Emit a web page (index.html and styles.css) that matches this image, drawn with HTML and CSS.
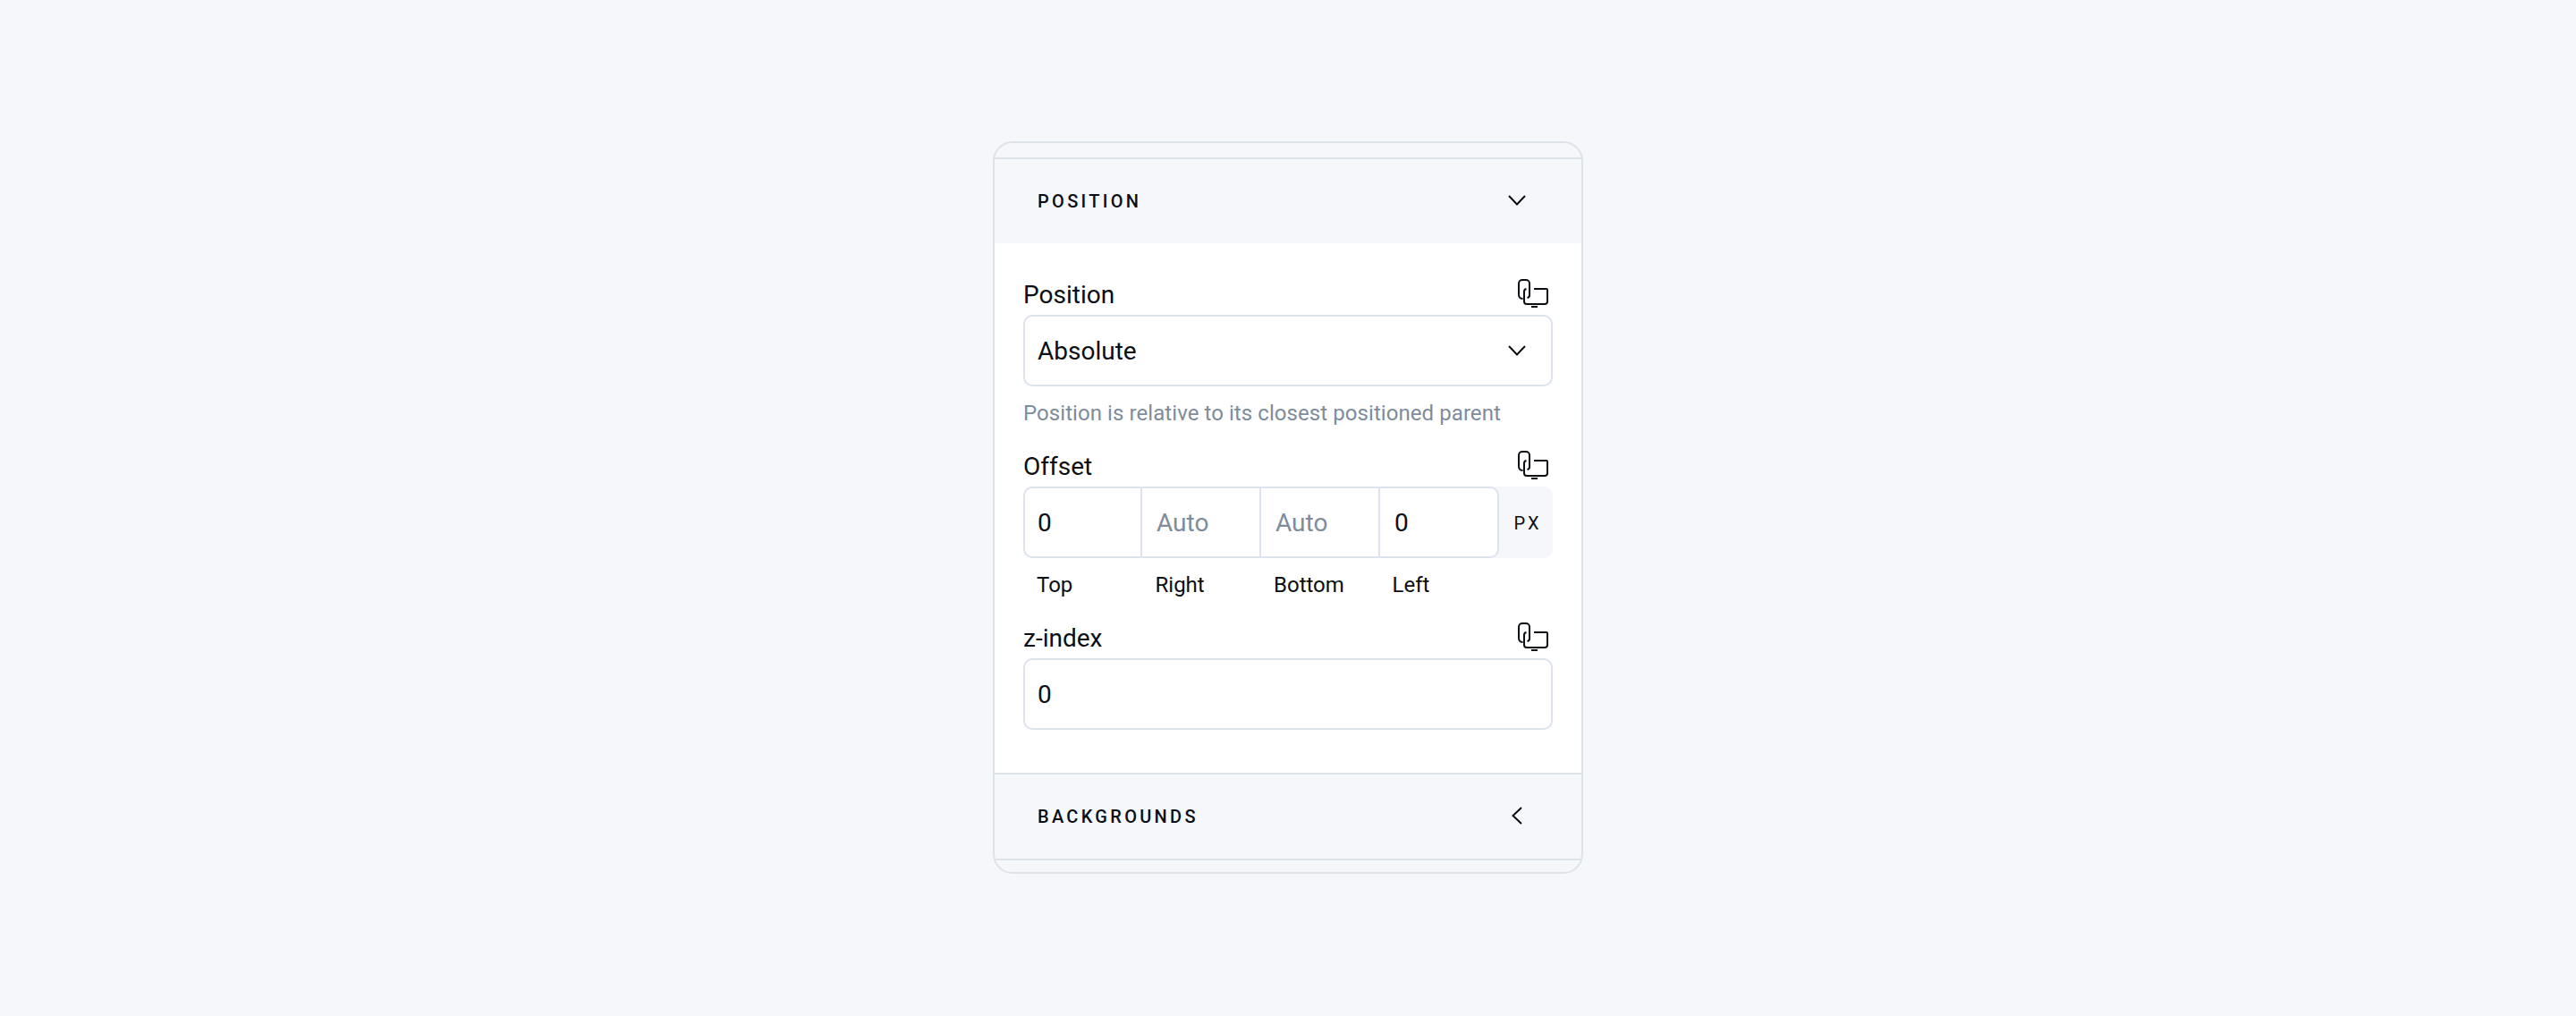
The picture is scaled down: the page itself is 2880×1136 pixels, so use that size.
FILE: index.html
```html
<!DOCTYPE html>
<html lang="en">
<head>
<meta charset="utf-8">
<title>Position panel</title>
<link rel="stylesheet" href="styles.css">
</head>
<body>
<svg class="sprite" width="0" height="0" aria-hidden="true">
  <defs>
    <symbol id="devices" viewBox="0 0 36 32">
      <path d="M6.500 22A4.500 4.500 0 0 1 2 17.500V5A4 4 0 0 1 6 1H10A4 4 0 0 1 14 5V18A3 3 0 0 1 11.500 21" />
      <path d="M10.500 11A3 3 0 0 0 8 14V25A3 3 0 0 0 11 28H31A3 3 0 0 0 34 25V12A1 1 0 0 0 33 11H19" />
      <path d="M16 31H23" />
    </symbol>
    <symbol id="chev-down" viewBox="0 0 20 12">
      <path d="M1 1L10 10.500L19 1" />
    </symbol>
    <symbol id="chev-left" viewBox="0 0 12 20">
      <path d="M11 1L1.500 10L11 19" />
    </symbol>
  </defs>
</svg>

<main class="panel">
  <section class="section">
    <header class="section-head">
      <h2 class="section-title">POSITION</h2>
      <svg class="icon-down"><use href="#chev-down"/></svg>
    </header>
    <div class="section-body">
      <div class="label-row">
        <span class="label">Position</span>
        <svg class="icon-devices"><use href="#devices"/></svg>
      </div>
      <div class="control select">
        <span>Absolute</span>
        <svg class="icon-down"><use href="#chev-down"/></svg>
      </div>
      <p class="help">Position is relative to its closest positioned parent</p>

      <div class="label-row">
        <span class="label">Offset</span>
        <svg class="icon-devices"><use href="#devices"/></svg>
      </div>
      <div class="offset">
        <div class="control offset-inputs">
          <span class="cell">0</span>
          <span class="cell muted">Auto</span>
          <span class="cell muted">Auto</span>
          <span class="cell">0</span>
        </div>
        <span class="unit">PX</span>
      </div>
      <div class="offset-labels">
        <span>Top</span>
        <span>Right</span>
        <span>Bottom</span>
        <span>Left</span>
      </div>

      <div class="label-row">
        <span class="label">z-index</span>
        <svg class="icon-devices"><use href="#devices"/></svg>
      </div>
      <div class="control"><span>0</span></div>
    </div>
  </section>
  <section class="section closed">
    <header class="section-head">
      <h2 class="section-title">BACKGROUNDS</h2>
      <svg class="icon-left"><use href="#chev-left"/></svg>
    </header>
  </section>
</main>
</body>
</html>
```
FILE: styles.css
```css
* { box-sizing: border-box; }
html, body { margin: 0; height: 100%; }
body {
  background: #f6f7fb;
  color: #0b0e13;
  font-family: Roboto, "Liberation Sans", sans-serif;
  font-size: 28px;
  padding-top: 158px;
  display: flex;
  justify-content: center;
}
.sprite { position: absolute; }
svg { fill: none; stroke: currentColor; stroke-width: 2; flex: none; }
.panel {
  width: 660px;
  height: 819px;
  border: 2px solid #dde3ea;
  border-radius: 22px;
  padding: 16px 0;
  overflow: hidden;
}
.section { border-top: 2px solid #dde3ea; }
.section.closed { border-bottom: 2px solid #dde3ea; }
.section-head {
  height: 94px;
  padding: 0 62px 0 48px;
  display: flex;
  align-items: center;
  justify-content: space-between;
}
.section-head svg { margin-bottom: 2px; }
.section-title {
  margin: 0;
  font-size: 20px;
  font-weight: 500;
  letter-spacing: 3.3px;
}
.section-body {
  background: #fff;
  padding: 40px 32px 48px;
}
.label-row {
  height: 40px;
  padding-bottom: 6px;
  display: flex;
  justify-content: space-between;
  align-items: center;
}
.icon-down { width: 20px; height: 12px; }
.section-head .icon-left { width: 12px; height: 20px; margin-right: 4px; }
.icon-devices { width: 36px; height: 32px; align-self: flex-start; margin-right: 4px; }
.control {
  height: 80px;
  border: 2px solid #dde3ea;
  border-radius: 10px;
  background: #fff;
  display: flex;
  align-items: center;
  padding: 0 14px;
}
.select { justify-content: space-between; padding-right: 28px; }
.help {
  margin: 10px 0 22px;
  line-height: 40px;
  font-size: 24px;
  letter-spacing: 0.07px;
  color: #7e8c9c;
}
.offset {
  display: flex;
  background: #f6f7fb;
  border-radius: 10px;
}
.offset-inputs {
  flex: 1;
  padding: 0;
}
.cell {
  flex: 1;
  height: 100%;
  display: flex;
  align-items: center;
  padding-left: 16px;
  border-left: 2px solid #dde3ea;
}
.cell:first-child { border-left: 0; padding-left: 14px; }
.muted { color: #7e8c9c; }
.unit {
  width: 60px;
  padding: 2px 0 0 4px;
  text-align: center;
  align-self: center;
  font-size: 20px;
  font-weight: 400;
  letter-spacing: 3px;
}
.offset-labels {
  display: grid;
  grid-template-columns: repeat(4, 132.500px);
  padding: 10px 0 22px 15px;
  line-height: 40px;
  font-size: 24px;
}
```
